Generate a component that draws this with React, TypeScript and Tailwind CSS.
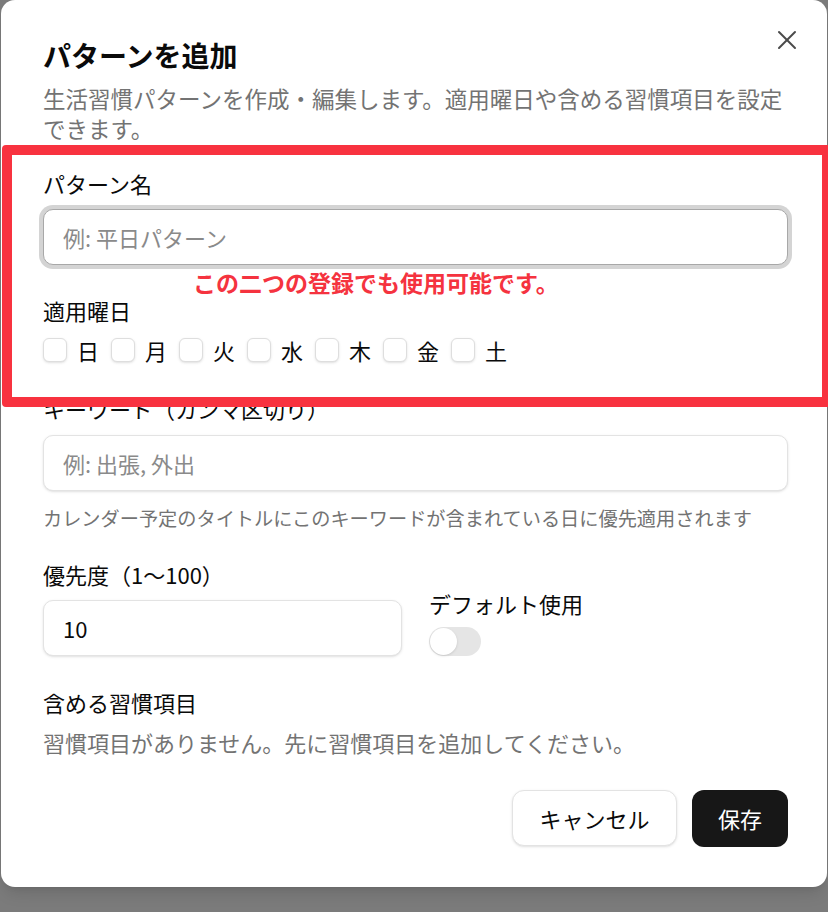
import { X } from 'lucide-react';

const days = ['日', '月', '火', '水', '木', '金', '土'];

const font = { fontFamily: '"Noto Sans CJK JP", "Noto Sans", sans-serif' };

export default function App() {
  return (
    <div className="relative h-[912px] w-[828px] overflow-hidden bg-[#7b7b7b]" style={font}>
      <div className="relative ml-px w-[826px] rounded-[14px] bg-white pb-[40px] pl-[42px] pr-[39px] pt-[37px] shadow-lg">
        <button className="absolute right-[24px] top-[24px] text-[#4a4a4a]">
          <X size={32} strokeWidth={1.5} />
        </button>

        {/* Header */}
        <h2 className="text-[28px] font-bold leading-[36px] text-[#0a0a0a]">パターンを追加</h2>
        <p className="mt-[10px] text-[22.5px] leading-[30px] text-[#737373]">
          生活習慣パターンを作成・編集します。適用曜日や含める習慣項目を設定できます。
        </p>

        {/* Pattern name */}
        <label className="mt-[25px] block text-[22px] leading-[30px] text-[#0a0a0a]">パターン名</label>
        <div className="mt-[11px] flex h-[56px] items-center rounded-[10px] border border-[#a8a8a8] bg-white px-[19px] shadow-[0_0_0_4px_#d4d4d4]">
          <span className="text-[22px] text-[#8a8a8a]">例: 平日パターン</span>
        </div>

        {/* Days */}
        <label className="mt-[30px] block text-[22px] leading-[30px] text-[#0a0a0a]">適用曜日</label>
        <div className="mt-[10px] flex items-center gap-[12px]">
          {days.map((d) => (
            <div key={d} className="flex items-center gap-[10px]">
              <span className="h-[24px] w-[24px] rounded-[6px] border border-[#dedede] bg-white shadow-sm" />
              <span className="text-[22px] leading-[30px] text-[#0a0a0a]">{d}</span>
            </div>
          ))}
        </div>

        {/* Keywords */}
        <label className="mt-[28px] block text-[22px] leading-[30px] text-[#0a0a0a]">キーワード（カンマ区切り）</label>
        <div className="mt-[12px] flex h-[56px] items-center rounded-[10px] border border-[#e3e3e3] bg-white px-[19px] shadow-sm">
          <span className="text-[22px] text-[#8a8a8a]">例: 出張, 外出</span>
        </div>
        <p className="mt-[13px] text-[19.2px] leading-[28px] text-[#737373]">
          カレンダー予定のタイトルにこのキーワードが含まれている日に優先適用されます
        </p>

        {/* Priority + default */}
        <div className="mt-[27px] grid grid-cols-2 items-end gap-x-[27px]">
          <div>
            <label className="block text-[22px] leading-[30px] text-[#0a0a0a]">優先度（1〜100）</label>
            <div className="mt-[11px] flex h-[56px] items-center rounded-[10px] border border-[#e3e3e3] bg-white px-[19px] shadow-sm">
              <span className="text-[22px] text-[#0a0a0a]">10</span>
            </div>
          </div>
          <div>
            <label className="block text-[22px] leading-[30px] text-[#0a0a0a]">デフォルト使用</label>
            <div className="mt-[9px] flex h-[29px] w-[52px] items-center rounded-full bg-[#e5e5e5] p-[1px]">
              <span className="h-[27px] w-[27px] rounded-full bg-white shadow-sm" />
            </div>
          </div>
        </div>

        {/* Habits */}
        <label className="mt-[31px] block text-[22px] leading-[30px] text-[#0a0a0a]">含める習慣項目</label>
        <p className="mt-[10px] text-[22px] leading-[30px] text-[#737373]">
          習慣項目がありません。先に習慣項目を追加してください。
        </p>

        {/* Footer */}
        <div className="mt-[33px] flex justify-end gap-[15px]">
          <button className="h-[56px] w-[165px] rounded-[12px] border border-[#e3e3e3] bg-white text-[22px] text-[#0a0a0a] shadow-sm">
            キャンセル
          </button>
          <button className="h-[57px] w-[96px] rounded-[12px] bg-[#171717] text-[22px] text-white">保存</button>
        </div>
      </div>

      {/* Annotation overlay */}
      <div className="absolute left-[2px] top-[145px] z-10 h-[262px] w-[830px] rounded-[4px] border-[10px] border-[#f8323f]" />
      <p className="absolute left-[193px] top-[267px] z-10 text-[23px] font-bold leading-[30px] text-[#f5333f] [text-shadow:0_0_2px_#fff]">
        この二つの登録でも使用可能です。
      </p>
    </div>
  );
}
